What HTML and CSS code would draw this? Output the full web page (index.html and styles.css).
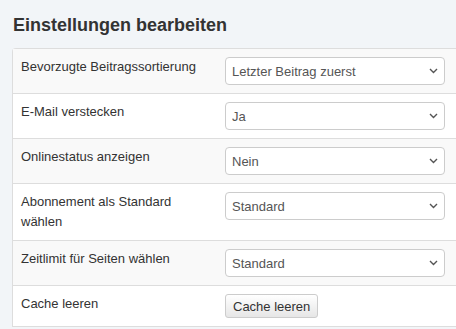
FILE: index.html
```html
<!DOCTYPE html>
<html lang="de">
<head>
  <meta charset="UTF-8" />
  <title>Einstellungen bearbeiten</title>
  <link rel="stylesheet" href="styles.css">
</head>
<body>
  <h2 class="page-title">Einstellungen bearbeiten</h2>

  <div class="settings">
    <div class="row">
      <label class="row-label" for="sortOrder">Bevorzugte Beitragssortierung</label>
      <div class="row-field">
        <div class="select-wrap">
          <select id="sortOrder">
            <option>Letzter Beitrag zuerst</option>
            <option>Erster Beitrag zuerst</option>
          </select>
          <svg class="chevron" width="9" height="6" viewBox="0 0 9 6"><path d="M1 1l3.5 3.5L8 1" fill="none" stroke="#555" stroke-width="1.4"/></svg>
        </div>
      </div>
    </div>
    <div class="row">
      <label class="row-label" for="hideMail">E-Mail verstecken</label>
      <div class="row-field">
        <div class="select-wrap">
          <select id="hideMail">
            <option>Ja</option>
            <option>Nein</option>
          </select>
          <svg class="chevron" width="9" height="6" viewBox="0 0 9 6"><path d="M1 1l3.5 3.5L8 1" fill="none" stroke="#555" stroke-width="1.4"/></svg>
        </div>
      </div>
    </div>
    <div class="row">
      <label class="row-label" for="onlineStatus">Onlinestatus anzeigen</label>
      <div class="row-field">
        <div class="select-wrap">
          <select id="onlineStatus">
            <option>Nein</option>
            <option>Ja</option>
          </select>
          <svg class="chevron" width="9" height="6" viewBox="0 0 9 6"><path d="M1 1l3.5 3.5L8 1" fill="none" stroke="#555" stroke-width="1.4"/></svg>
        </div>
      </div>
    </div>
    <div class="row">
      <label class="row-label" for="subscription">Abonnement als Standard wählen</label>
      <div class="row-field">
        <div class="select-wrap">
          <select id="subscription">
            <option>Standard</option>
          </select>
          <svg class="chevron" width="9" height="6" viewBox="0 0 9 6"><path d="M1 1l3.5 3.5L8 1" fill="none" stroke="#555" stroke-width="1.4"/></svg>
        </div>
      </div>
    </div>
    <div class="row">
      <label class="row-label" for="timeLimit">Zeitlimit für Seiten wählen</label>
      <div class="row-field">
        <div class="select-wrap">
          <select id="timeLimit">
            <option>Standard</option>
          </select>
          <svg class="chevron" width="9" height="6" viewBox="0 0 9 6"><path d="M1 1l3.5 3.5L8 1" fill="none" stroke="#555" stroke-width="1.4"/></svg>
        </div>
      </div>
    </div>
    <div class="row">
      <span class="row-label">Cache leeren</span>
      <div class="row-field">
        <button class="btn" type="button">Cache leeren</button>
      </div>
    </div>
  </div>
</body>
</html>
```

FILE: styles.css
```css
body {
  font-family: 'Liberation Sans', Arial, sans-serif;
  font-size: 13px;
  line-height: 20px;
  color: #333;
  background: #f2f5f8;
  margin: 0;
  padding: 0 0 0 12px;
  overflow: hidden;
}
.page-title {
  font-size: 18px;
  font-weight: bold;
  line-height: 22px;
  margin: 0;
  padding: 14px 0 12px 1px;
  color: #333;
}

/* settings table, runs off the right edge so no right border */
.settings {
  border: 1px solid #ddd;
  border-right: 0;
  border-radius: 4px 0 0 0;
  background: #fff;
}
.row {
  display: grid;
  grid-template-columns: 203px 1fr;
}
.row + .row {
  border-top: 1px solid #ddd;
}
.row:nth-child(odd) {
  background: #f9f9f9;
}
.row-label {
  padding: 8px 12px 8px 8px;
}
.row-field {
  padding: 8px 9px;
}
.select-wrap {
  position: relative;
  width: 220px;
}
select {
  appearance: none;
  -webkit-appearance: none;
  display: block;
  width: 100%;
  height: 28px;
  padding: 0 24px 0 6px;
  font-family: inherit;
  font-size: 13px;
  color: #555;
  background: #fff;
  border: 1px solid #ccc;
  border-radius: 4px;
}
.chevron {
  position: absolute;
  right: 7px;
  top: 11px;
  pointer-events: none;
}
.btn {
  font-family: inherit;
  font-size: 13px;
  color: #333;
  height: 24px;
  padding: 0 7px;
  background: linear-gradient(to bottom, #fff, #e6e6e6);
  border: 1px solid #ccc;
  border-radius: 3px;
  cursor: pointer;
}
```
